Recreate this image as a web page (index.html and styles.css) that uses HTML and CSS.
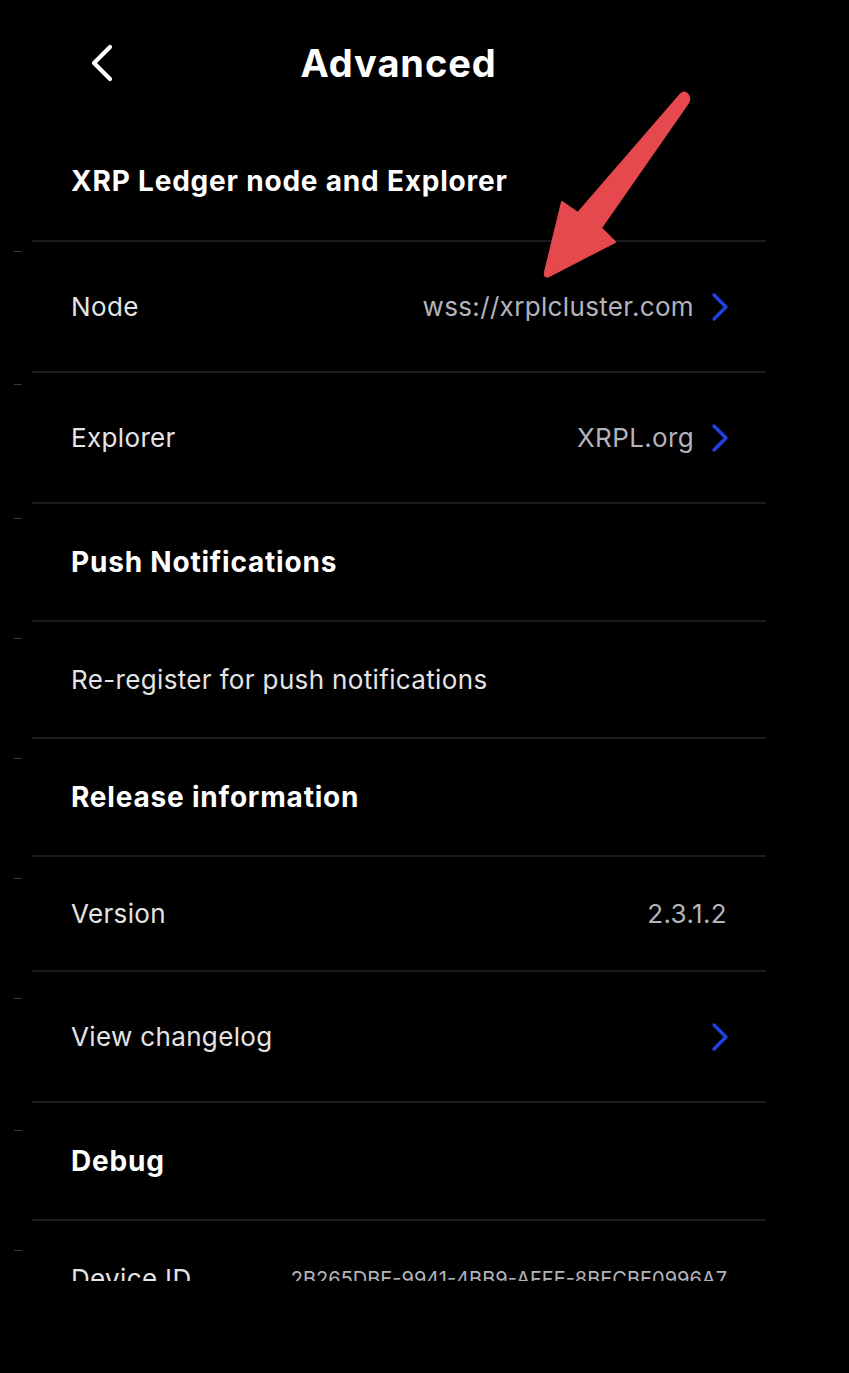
FILE: index.html
```html
<!DOCTYPE html>
<html>
<head>
<meta charset="utf-8">
<link rel="stylesheet" href="styles.css">
</head>
<body>
<div class="screen">
  <div class="viewport">
    <header class="topbar">
      <span class="back">
        <svg width="26" height="38" viewBox="0 0 26 38"><path d="M22 3 L6 19 L22 35" fill="none" stroke="#fff" stroke-width="4.2" stroke-linecap="round" stroke-linejoin="round"/></svg>
      </span>
      <h1 class="title">Advanced</h1>
    </header>
    <div class="list">
      <div class="section first">XRP Ledger node and Explorer</div>
      <div class="row tall">
        <span class="label">Node</span>
        <span class="value">wss://xrplcluster.com</span>
        <span class="chev"><svg width="20" height="30" viewBox="0 0 20 30"><path d="M4 3 L16 15 L4 27" fill="none" stroke="#2042e3" stroke-width="3.4" stroke-linecap="round" stroke-linejoin="round"/></svg></span>
      </div>
      <div class="row tall">
        <span class="label">Explorer</span>
        <span class="value">XRPL.org</span>
        <span class="chev"><svg width="20" height="30" viewBox="0 0 20 30"><path d="M4 3 L16 15 L4 27" fill="none" stroke="#2042e3" stroke-width="3.4" stroke-linecap="round" stroke-linejoin="round"/></svg></span>
      </div>
      <div class="section">Push Notifications</div>
      <div class="row">
        <span class="label">Re-register for push notifications</span>
      </div>
      <div class="section">Release information</div>
      <div class="row short">
        <span class="label">Version</span>
        <span class="value nochev">2.3.1.2</span>
      </div>
      <div class="row tall">
        <span class="label">View changelog</span>
        <span class="value"></span>
        <span class="chev"><svg width="20" height="30" viewBox="0 0 20 30"><path d="M4 3 L16 15 L4 27" fill="none" stroke="#2042e3" stroke-width="3.4" stroke-linecap="round" stroke-linejoin="round"/></svg></span>
      </div>
      <div class="section">Debug</div>
      <div class="row">
        <span class="label">Device ID</span>
        <span class="value nochev small">2B265DBE-9941-4BB9-AFFE-8BECBE0996A7</span>
      </div>
    </div>
    <div class="ticks">
      <span class="tick t1"></span><span class="tick t2"></span><span class="tick t3"></span>
      <span class="tick t4"></span><span class="tick t5"></span><span class="tick t6"></span>
      <span class="tick t7"></span><span class="tick t8"></span><span class="tick t9"></span>
    </div>
  </div>
  <svg class="arrow" width="849" height="300" viewBox="0 0 849 300">
    <path d="M681 94 Q686 90 689 97 Q690 100 688 103 L601 228 L615 242 L549 276 Q544 278 545 272 L562 202 L578 213 Z" fill="#e5484d" stroke="#e5484d" stroke-width="2" stroke-linejoin="round"/>
  </svg>
</div>
</body>
</html>
```
FILE: styles.css
```css
html, body {
  margin: 0;
  padding: 0;
  background: #000;
}
.screen {
  position: relative;
  width: 849px;
  height: 1373px;
  background: #000;
  font-family: "Inter", "Lato", "Liberation Sans", sans-serif;
  overflow: hidden;
}
.viewport {
  position: relative;
  height: 1281px;
  overflow: hidden;
}
.topbar {
  height: 122px;
  display: flex;
  align-items: flex-start;
  justify-content: center;
  position: relative;
  padding-top: 40px;
  box-sizing: border-box;
}
.topbar .back {
  position: absolute;
  left: 88px;
  top: 44px;
  display: flex;
}
.title {
  margin: 0;
  font-size: 38px;
  line-height: 46px;
  font-weight: 700;
  color: #fff;
  letter-spacing: 0.9px;
  position: relative;
  left: -26px;
}
.list {
  margin-left: 32px;
  width: 734px;
}
.section, .row {
  display: flex;
  align-items: center;
  box-sizing: border-box;
  border-top: 2px solid #1a1a20;
  padding-left: 39px;
}
.section {
  height: 118px;
  font-size: 28px;
  font-weight: 700;
  color: #fff;
  letter-spacing: 0.8px;
}
.section.first {
  border-top: none;
  height: 118px;
}
.row {
  height: 117px;
  font-size: 26px;
  color: #e4e4e6;
  padding-right: 36px;
  letter-spacing: 0.35px;
}
.row.tall { height: 131px; }
.row.short { height: 115px; }
.label { flex: none; }
.value {
  flex: 1;
  text-align: right;
  color: #b3b3bb;
  padding-right: 16px;
}
.value.nochev { padding-right: 3px; }
.value.small { font-size: 20px; letter-spacing: 0; }
.chev {
  display: flex;
  width: 20px;
}
.ticks {
  position: absolute;
  left: 14px;
  top: 0;
}
.tick {
  position: absolute;
  left: 0;
  width: 8px;
  height: 1px;
  background: #3a3a3e;
}
.t1 { top: 251px; }
.t2 { top: 384px; }
.t3 { top: 518px; }
.t4 { top: 638px; }
.t5 { top: 758px; }
.t6 { top: 878px; }
.t7 { top: 998px; }
.t8 { top: 1130px; }
.t9 { top: 1250px; }
.arrow {
  position: absolute;
  left: 0;
  top: 0;
}
```
